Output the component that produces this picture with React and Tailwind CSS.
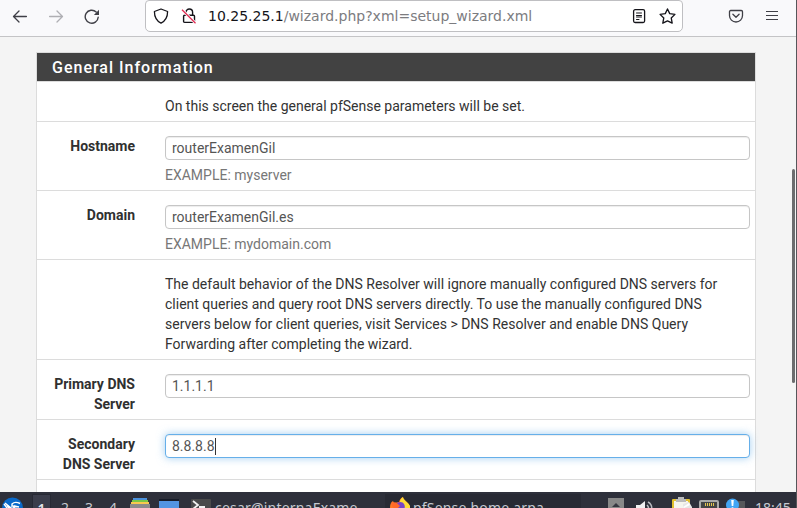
import React from 'react';

function Toolbar() {
  return (
    <header className="flex h-[37px] shrink-0 items-start border-b border-[#c4c4c6] bg-[#f9f9fb] text-[#3f3f46]">
      <div className="flex h-8 w-[145px] items-center gap-5 pl-3">
        <svg width="16" height="16" viewBox="0 0 16 16" fill="none" stroke="currentColor" strokeWidth="1.3" strokeLinecap="round" strokeLinejoin="round">
          <path d="M14.4 8.5H1.5M7 3 1.5 8.5 7 14" />
        </svg>
        <svg className="text-[#afafb3]" width="16" height="16" viewBox="0 0 16 16" fill="none" stroke="currentColor" strokeWidth="1.3" strokeLinecap="round" strokeLinejoin="round">
          <path d="M1.6 8.5h12.9M9 3l5.5 5.5L9 14" />
        </svg>
        <svg width="16" height="16" viewBox="0 0 16 16" fill="none" stroke="currentColor" strokeWidth="1.4" strokeLinecap="round">
          <path d="M14.2 9.200A6.500 6.500 0 1 1 12.200 4" />
          <path d="M15 1.800v5.100H9.900z" fill="currentColor" stroke="none" />
        </svg>
      </div>
      <div className="flex h-8 w-[538px] items-center rounded-b-[5px] rounded-t-[4px] border border-[#bfbfc2] bg-white pl-[7px] pr-[6px] text-[#15141a]">
        <svg width="16" height="16" viewBox="0 0 16 16" fill="none" stroke="currentColor" strokeWidth="1.300" strokeLinejoin="round">
          <path d="M8 1 14.600 3.500c0 5-2 9.300-6.600 11.700C3.400 12.800 1.400 8.500 1.400 3.500z" />
        </svg>
        <svg className="ml-3" width="16" height="16" viewBox="0 0 16 16" fill="none" stroke="currentColor" strokeWidth="1.4">
          <path d="M5 7V4.300a3.300 3.300 0 0 1 6.600 0V7M3.600 7.200h8.900c.7 0 1 .4 1 1v5.200c0 .6-.4 1-1 1H3.600c-.6 0-1-.4-1-1V8.200c0-.6.4-1 1-1z" />
          <path d="M1 1.700 14.500 15.200" stroke="white" strokeWidth="3" />
          <path d="M1 1.700 14.500 15.200" stroke="#e22850" strokeWidth="1.300" />
        </svg>
        <span className="ml-[11px] flex-1 whitespace-pre font-['DejaVu_Sans',sans-serif] text-[14px] leading-5 text-[#15141a]">
          10.25.25.1<span className="text-[#7c7c80]">/wizard.php?xml=setup_wizard.xml</span>
        </span>
        <svg width="16" height="16" viewBox="0 0 16 16" fill="none" stroke="currentColor" strokeWidth="1.300" strokeLinecap="round">
          <rect x="2.600" y="1.700" width="11" height="12.800" rx="1.500" />
          <path d="M5.500 5h5M5.500 7.500h5M5.500 9h5M5.500 11.500h2.500" strokeWidth="1" />
        </svg>
        <svg className="ml-3" width="17" height="17" viewBox="0 0 16 16" fill="none" stroke="currentColor" strokeWidth="1.250" strokeLinejoin="round">
          <path d="m8 .900 2.100 4.400 4.900.7-3.500 3.400.9 4.900L8 12.100l-4.400 2.200.9-4.900L1 6l4.900-.7z" />
        </svg>
      </div>
      <div className="flex h-8 flex-1 items-center pl-[45px]">
        <svg width="16" height="16" viewBox="0 0 16 16" fill="none" stroke="currentColor" strokeWidth="1.300" strokeLinecap="round" strokeLinejoin="round">
          <path d="M2.700 2.500h10.600c.7 0 1.200.5 1.200 1.200V7.500a6.500 6.500 0 0 1-13 0V3.700c0-.7.500-1.200 1.200-1.200zM4.900 6.300 8 9.300l3.100-3" />
        </svg>
        <svg className="ml-5" width="16" height="16" viewBox="0 0 16 16" fill="none" stroke="currentColor" strokeWidth="1.200">
          <path d="M2 3.500h12M2 7.500h12M2 11.500h12" />
        </svg>
      </div>
    </header>
  );
}

function Row({ label, children }) {
  return (
    <div className="flex border-b border-[#dcdcdc] pb-[5px] pl-[10px] pr-[5px] pt-[14px] leading-5">
      <div className="w-[88px] shrink-0 text-right font-bold text-[#303030]">{label}</div>
      <div className="ml-[30px] min-w-0 flex-1">{children}</div>
    </div>
  );
}

function Field({ value, focused, help }) {
  return (
    <>
      <div
        className={
          'flex h-6 items-center rounded-[4px] border bg-white px-[6px] text-[#555] ' +
          (focused
            ? 'border-[#66afe9] shadow-[inset_0_1px_1px_rgba(0,0,0,.075),0_0_8px_rgba(102,175,233,.6)]'
            : 'border-[#c6c6c6] shadow-[inset_0_1px_1px_rgba(0,0,0,.075)]')
        }
      >
        {value}
        {focused && <span className="h-[17px] w-px bg-[#333]" />}
      </div>
      {help && <div className="mt-[5px] text-[#777]">{help}</div>}
    </>
  );
}

function Taskbar() {
  return (
    <footer className="h-4 shrink-0 overflow-hidden bg-[#2e303b] font-['Noto_Sans',sans-serif] text-[#c5c8d0]">
      <div className="flex h-8 items-center">
        <svg className="ml-[2px] shrink-0" width="21" height="22" viewBox="0 0 21 22">
          <circle cx="10.500" cy="11" r="10.500" fill="#0969ca" />
          <path d="m2 7 3 4M3 6l6 5M10 10V7c2-2 5-2 8-.5M12 9l5 1M6 12l6-1 5 1" stroke="#fff" strokeWidth="1.400" fill="none" />
          <path d="m4 7 6 4-4 1zM10 8l4 1-2 3z" fill="#fff" />
        </svg>
        <div className="ml-[9px] h-7 w-[19px] shrink-0 border border-[#272934] bg-[#3b3d4b] text-center text-[14px] font-semibold leading-7 text-[#e4e5ea]">1</div>
        <span className="ml-[2px] w-6 shrink-0 text-center text-[14px] leading-7">2</span>
        <span className="w-6 shrink-0 text-center text-[14px] leading-7">3</span>
        <span className="w-6 shrink-0 text-center text-[14px] leading-7">4</span>
        <svg className="ml-[5px] shrink-0" width="20" height="20" viewBox="0 0 20 20">
          <path d="M3 0h14v2H3z" fill="#4b91dc" />
          <path d="M2 2h16v2H2z" fill="#78c846" />
          <path d="M1 4h18v2H1z" fill="#f8c94f" />
          <path d="M0 6h20v14H0z" fill="#8b8b8b" />
        </svg>
        <svg className="ml-[9px] shrink-0" width="20" height="20" viewBox="0 0 20 20">
          <path d="M0 1h20v2H0z" fill="#171c29" />
          <path d="M0 3h20v17H0z" fill="#5294e2" />
        </svg>
        <svg className="ml-3 shrink-0" width="20" height="20" viewBox="0 0 20 20">
          <rect y="1" width="20" height="19" rx="1" fill="#4a4a4b" />
          <path d="m2 3 5 4-5 4M8 9h6" stroke="#f2f2f2" strokeWidth="1.800" fill="none" />
        </svg>
        <span className="ml-1 w-[170px] shrink-0 whitespace-nowrap text-[14px] leading-7 tracking-[.2px]">cesar@internaExame</span>
        <div className="flex h-7 w-[196px] shrink-0 items-center bg-[#282a34]">
          <svg className="ml-[5px] shrink-0" width="20" height="22" viewBox="0 0 20 22">
            <path d="M0 11c0-4 1-6 3-7l1 2 5-1c1-3 2-4 4-5 0 3 6 5 7 10 1 8-6 12-10 12S0 18 0 11z" fill="#ff7a25" />
            <path d="M10 5c0-2 1-4 3-5 0 3 5 5 7 9v6h-6z" fill="#ffdc37" />
            <path d="M7 6c3-2 6-1 7 1 2 3 0 7-3 7-4 0-6-3-4-8z" fill="#7845c7" />
            <path d="M1 6c4-2 6 0 9 3l-3 3c-3 0-5-2-6-6z" fill="#ff6929" />
          </svg>
          <span className="ml-[3px] whitespace-pre text-[14px] leading-7 tracking-[.18px]">pfSense.home.arpa -</span>
        </div>
        <svg className="ml-[27px] shrink-0" width="16" height="20" viewBox="0 0 16 20">
          <path d="M0 0h16v20H0z" fill="#888" />
          <path d="m4 9 4-4 4 4z" fill="#373841" />
        </svg>
        <svg className="ml-3 shrink-0" width="18" height="20" viewBox="0 0 18 20">
          <path d="M0 7h4l5-4v14l-5-4H0z" fill="#f0f0f2" />
          <path d="M11 7c2 2 2 4 0 6M12 4c5 3 5 9 0 12" stroke="#b9bac1" strokeWidth="1.500" fill="none" />
        </svg>
        <svg className="ml-[18px] shrink-0" width="20" height="22" viewBox="0 0 20 22">
          <rect y="2" width="18" height="20" rx="1" fill="#e3c12e" />
          <path d="M2 4h14v18H2z" fill="#f6f5ee" />
          <path d="M4 2h2V0h6v2h2v3H4z" fill="#bbb" />
          <path d="m11 7 6-2 3 5v12h-9z" fill="#e6e6e6" />
          <path d="m11 10 6-4 1 2-6 3z" fill="#fff" />
        </svg>
        <svg className="ml-[7px] shrink-0" width="20" height="16" viewBox="0 0 20 16">
          <rect x="1" y="1" width="18" height="16" rx="1" fill="#444545" stroke="#aaa" strokeWidth="2" />
          <path d="M6.500 3v3M8.500 3v3M10.500 3v3M12.500 3v3M14.500 3v3" stroke="#e6c651" />
        </svg>
        <svg className="ml-[7px] shrink-0" width="21" height="21" viewBox="0 0 21 21">
          <path d="M8 3h11v18H8z" fill="#56575a" />
          <circle cx="6.500" cy="7" r="6.500" fill="#42a5f5" />
          <path d="M5.200 2h2.600l-.5 6H5.700z" fill="#fff" />
          <circle cx="6.500" cy="10.500" r="1.200" fill="#fff" />
        </svg>
        <span className="ml-[8px] shrink-0 text-[14px] leading-7">18:45</span>
      </div>
    </footer>
  );
}

export default function App() {
  return (
    <div className="h-[508px] w-[797px] overflow-hidden border-r border-[#56565a] bg-[#f4f4f4]">
      <div className="flex h-full flex-col">
        <Toolbar />
        <div className="flex min-h-0 flex-1 overflow-hidden">
          <main className="ml-9 mt-[15px] w-[720px] shrink-0 self-start border border-[#dcdcdc] bg-white font-['Roboto',sans-serif] text-[14px] text-[#333]">
            <h2 className="h-[29px] border-b border-[#dcdcdc] bg-[#424242] pl-[15px] text-[16px] font-medium leading-[29px] tracking-[1px] text-white">
              General Information
            </h2>
            <Row>On this screen the general pfSense parameters will be set.</Row>
            <Row label="Hostname">
              <Field value="routerExamenGil" help="EXAMPLE: myserver" />
            </Row>
            <Row label="Domain">
              <Field value="routerExamenGil.es" help="EXAMPLE: mydomain.com" />
            </Row>
            <Row>
              The default behavior of the DNS Resolver will ignore manually configured DNS servers for
              <br />
              client queries and query root DNS servers directly. To use the manually configured DNS
              <br />
              servers below for client queries, visit Services &gt; DNS Resolver and enable DNS Query
              <br />
              Forwarding after completing the wizard.
            </Row>
            <Row label={<>Primary DNS<br />Server</>}>
              <Field value="1.1.1.1" />
            </Row>
            <Row label={<>Secondary<br />DNS Server</>}>
              <Field value="8.8.8.8" focused />
            </Row>
            <div className="h-5" />
          </main>
          <div className="ml-9 mt-[132px] h-[214px] w-[3px] rounded-full bg-[#6c6c6e]" />
        </div>
        <Taskbar />
      </div>
    </div>
  );
}
